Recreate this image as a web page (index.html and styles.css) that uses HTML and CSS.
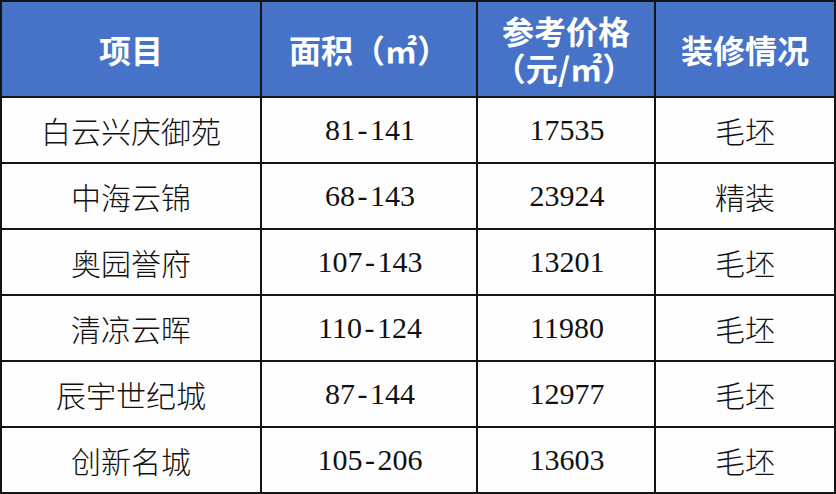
FILE: index.html
```html
<!DOCTYPE html>
<html lang="zh-CN">
<head>
<meta charset="utf-8">
<link rel="stylesheet" href="styles.css">
</head>
<body>
<div class="grid">
  <div class="cell head">项目</div>
  <div class="cell head">面积（㎡）</div>
  <div class="cell head two"><span class="l1">参考价格</span><span class="l2">（元/㎡）</span></div>
  <div class="cell head">装修情况</div>

  <div class="cell name">白云兴庆御苑</div>
  <div class="cell num">81<span class="dash">-</span>141</div>
  <div class="cell num">17535</div>
  <div class="cell name">毛坯</div>

  <div class="cell name">中海云锦</div>
  <div class="cell num">68<span class="dash">-</span>143</div>
  <div class="cell num">23924</div>
  <div class="cell name">精装</div>

  <div class="cell name">奥园誉府</div>
  <div class="cell num">107<span class="dash">-</span>143</div>
  <div class="cell num">13201</div>
  <div class="cell name">毛坯</div>

  <div class="cell name">清凉云晖</div>
  <div class="cell num">110<span class="dash">-</span>124</div>
  <div class="cell num">11980</div>
  <div class="cell name">毛坯</div>

  <div class="cell name">辰宇世纪城</div>
  <div class="cell num">87<span class="dash">-</span>144</div>
  <div class="cell num">12977</div>
  <div class="cell name">毛坯</div>

  <div class="cell name">创新名城</div>
  <div class="cell num">105<span class="dash">-</span>206</div>
  <div class="cell num">13603</div>
  <div class="cell name">毛坯</div>
</div>
</body>
</html>
```
FILE: styles.css
```css
html, body {
  margin: 0;
  padding: 0;
  background: #ffffff;
}
.grid {
  width: 836px;
  height: 494px;
  box-sizing: border-box;
  border: 2px solid #141414;
  background: #141414;
  display: grid;
  grid-template-columns: 258px 214px 176px 178px;
  grid-template-rows: 94px repeat(6, 64px);
  gap: 2px;
}
.cell {
  background: #fdfdfd;
  display: flex;
  align-items: center;
  justify-content: center;
  color: #111111;
  font-family: "Noto Sans CJK SC", "Noto Sans", sans-serif;
}
.head {
  background: #4673c8;
  color: #ffffff;
  font-weight: 700;
  font-size: 32px;
}
.two {
  flex-direction: column;
  line-height: 37px;
}
.two .l2 {
  margin-left: -4px;
}
.name {
  font-size: 30px;
  font-weight: 300;
}
.num {
  font-family: "Liberation Serif", "DejaVu Serif", serif;
  font-size: 30px;
  padding-left: 2px;
}
.dash {
  display: inline-block;
  width: 15px;
  text-align: center;
}
```
